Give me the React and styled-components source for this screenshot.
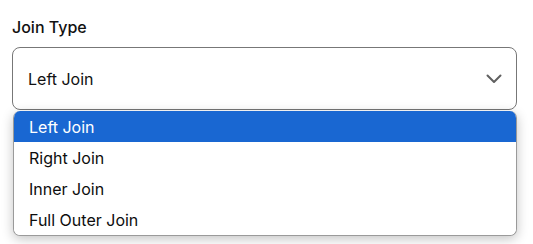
import React from "react";
import styled, { createGlobalStyle } from "styled-components";

const Global = createGlobalStyle`
  html, body { margin: 0; padding: 0; background: #fff; }
  body { font-family: Inter, "Noto Sans", sans-serif; color: #111; }
`;

const Field = styled.div`
  padding: 17px 16px 8px 12px;
  width: 505px;
`;

const Label = styled.div`
  font-size: 16px;
  font-weight: 500;
  line-height: 20px;
  color: #111;
  margin-bottom: 10px;
`;

const SelectBox = styled.div`
  height: 61px;
  border: 1px solid #777;
  border-radius: 8px;
  display: flex;
  align-items: center;
  justify-content: space-between;
  padding: 0 13px 0 15px;
  font-size: 16px;
  color: #111;
  background: #fff;
`;

const Menu = styled.div`
  margin: 1px 0 0 1px;
  width: 502px;
  border: 1px solid #9a9a9a;
  border-top: none;
  border-radius: 7px;
  background: #fff;
  overflow: hidden;
  box-shadow: 0 3px 12px rgba(0, 0, 0, 0.24);
`;

const Option = styled.div`
  height: 31px;
  display: flex;
  align-items: center;
  padding-left: 15px;
  font-size: 16px;
  color: ${(p) => (p.$active ? "#fff" : "#0d0d0d")};
  background: ${(p) => (p.$active ? "#1967d2" : "#fff")};
`;

const Chevron = () => (
  <svg width="18" height="18" viewBox="0 0 18 18" fill="none">
    <path d="M2.5 5.5 L9 12 L15.5 5.5" stroke="#606060" strokeWidth="2" strokeLinecap="round" strokeLinejoin="round" />
  </svg>
);

const options = ["Left Join", "Right Join", "Inner Join", "Full Outer Join"];

export default function App() {
  return (
    <>
      <Global />
      <Field>
        <Label>Join Type</Label>
        <SelectBox>
          <span>Left Join</span>
          <Chevron />
        </SelectBox>
        <Menu>
          {options.map((o, i) => (
            <Option key={o} $active={i === 0}>{o}</Option>
          ))}
        </Menu>
      </Field>
    </>
  );
}
